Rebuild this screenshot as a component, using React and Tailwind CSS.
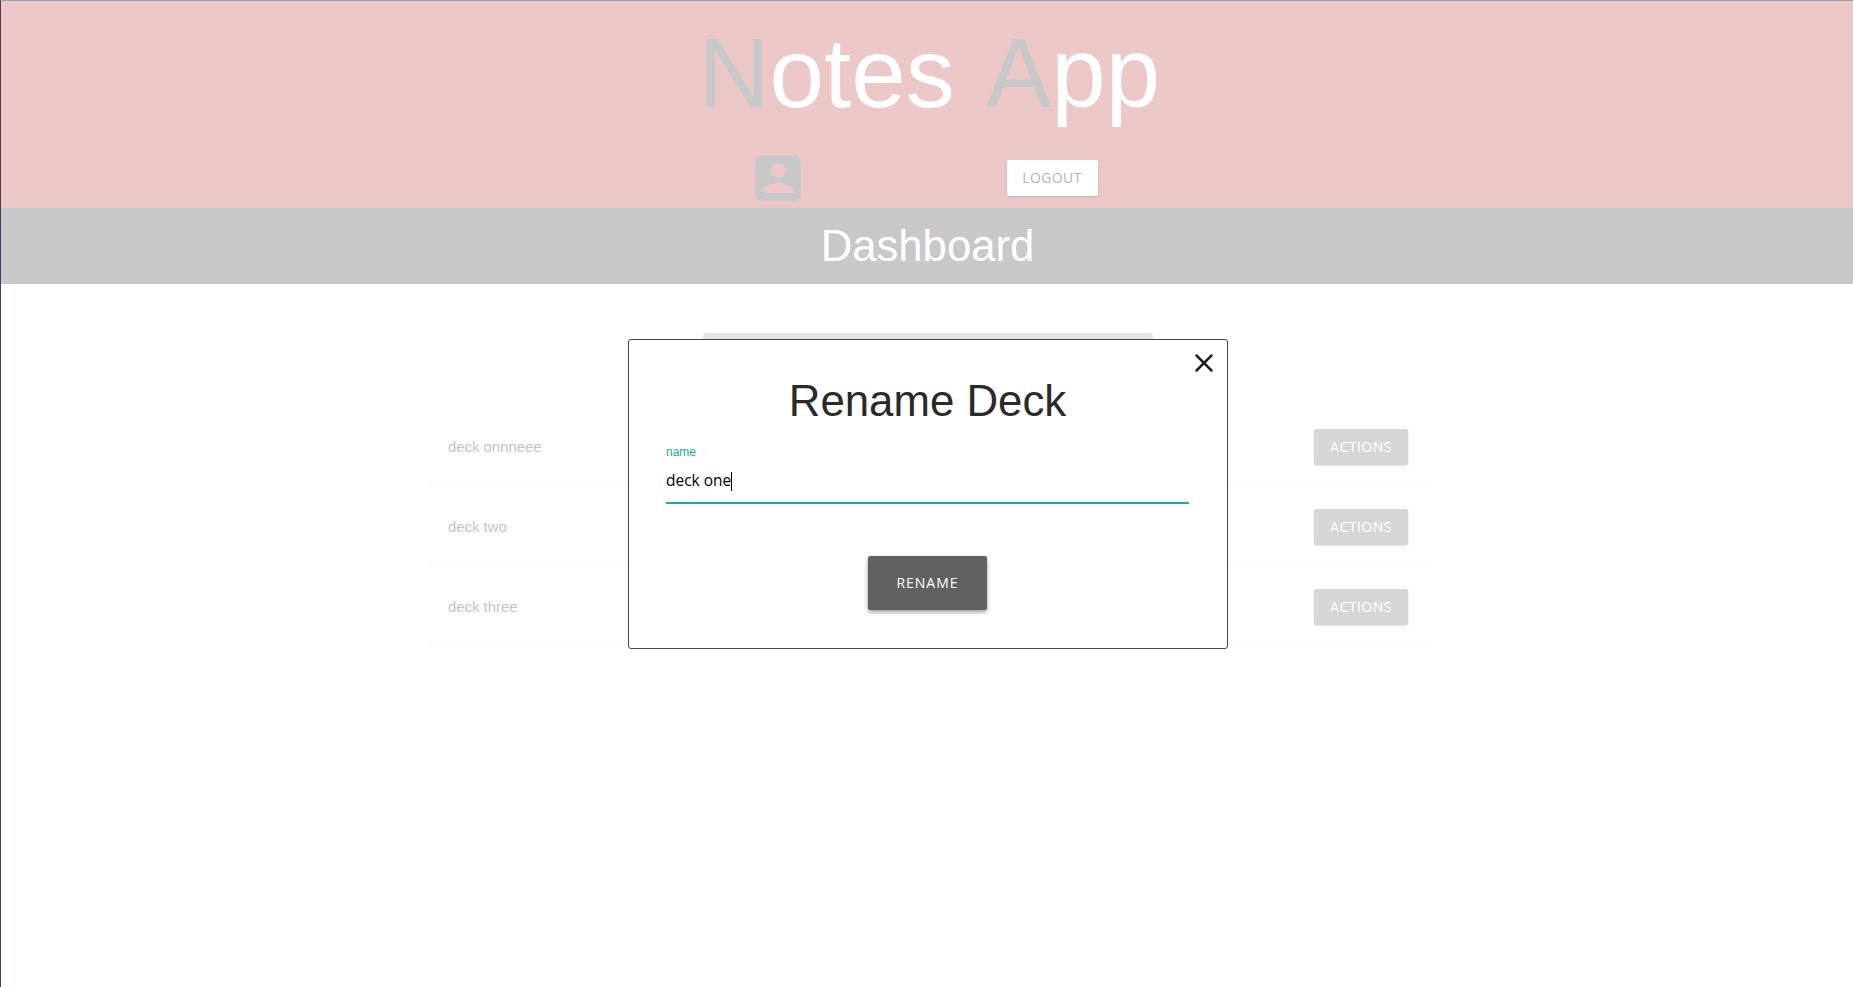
import { X } from "lucide-react";

const decks = ["deck onnneee", "deck two", "deck three"];

function AccountBox() {
  return (
    <svg viewBox="0 0 24 24" className="w-[60px] h-[60px] fill-[#c8c8c8]">
      <path d="M3 5v14c0 1.1.89 2 2 2h14c1.1 0 2-.9 2-2V5c0-1.1-.9-2-2-2H5c-1.11 0-2 .9-2 2zm12 4c0 1.66-1.34 3-3 3s-3-1.34-3-3 1.34-3 3-3 3 1.34 3 3zm-9 8c0-2 4-3.1 6-3.1s6 1.1 6 3.1v1H6v-1z" />
    </svg>
  );
}

export default function App() {
  return (
    <div className="relative min-h-[987px] bg-white border-l border-t border-l-[#4b3a57] border-t-[#9aa0a6] font-['Liberation_Sans',sans-serif]">
      {/* Header */}
      <header className="h-[207px] bg-[#ebc7c8] flex flex-col items-center">
        <h1 className="mt-[17px] pr-[1px] pl-[6px] text-[98px] leading-[110px] text-white whitespace-nowrap">
          <span className="text-[#c8c8c8]">N</span>otes <span className="ml-[4px] text-[#c8c8c8]">A</span>pp
        </h1>
        <div className="mt-[20px] w-[350px] mr-[9px] flex items-center justify-between">
          <AccountBox />
          <button className="w-[91px] h-[36px] pb-[2px] bg-white rounded-[2px] shadow-sm text-[14px] tracking-[0.4px] text-[#b4b4b4] font-['Open_Sans',sans-serif]">
            LOGOUT
          </button>
        </div>
      </header>

      <div className="h-[76px] bg-[#c8c8c8] flex items-center justify-center pl-[1px] text-[43.7px] text-white">
        Dashboard
      </div>

      {/* Deck list, dimmed behind the dialog */}
      <main className="w-[998px] mx-auto pt-[49px]">
        <div className="w-[450px] h-[40px] ml-[275px] bg-[#e5e5e5] rounded-[3px] mb-[34px]" />
        {decks.map((name) => (
          <div key={name} className="h-[80px] flex items-center justify-between pl-[20px] pr-[18px] border-b border-[#f7f7f7]">
            <span className="pt-[2px] text-[14.9px] text-[#c4c4c4]">{name}</span>
            <button className="w-[94px] h-[36px] bg-[#d6d6d6] rounded-[2px] shadow-sm text-[14px] tracking-[0.5px] text-white font-['Open_Sans',sans-serif]">
              ACTIONS
            </button>
          </div>
        ))}
      </main>

      {/* Rename dialog */}
      <div className="absolute top-[338px] left-[627px] w-[600px] h-[310px] bg-white border border-[#444] rounded-[3px] pl-[37px] pr-[38px]">
        <button className="absolute top-[8px] right-[8px] text-[#222]">
          <X size={30} strokeWidth={2} />
        </button>
        <h2 className="mt-[33px] text-center text-[43.8px] leading-[56px] text-[#2a2a2a]">Rename Deck</h2>
        <div className="mt-[16px] border-b-2 border-[#26a69a] h-[59px]">
          <label className="block text-[12px] leading-[14px] text-[#26a69a]">name</label>
          <div className="mt-[9px] flex items-center h-[26px] text-[15.5px] text-black font-['Open_Sans',sans-serif]">
            deck one<span className="w-px h-[19px] bg-black" />
          </div>
        </div>
        <div className="mt-[52px] flex justify-center">
          <button className="w-[119px] h-[54px] pb-[2px] bg-[#616161] rounded-[2px] shadow-[0_2px_4px_rgba(0,0,0,0.4)] text-[14px] tracking-[1px] text-white font-['Open_Sans',sans-serif]">
            RENAME
          </button>
        </div>
      </div>
    </div>
  );
}
